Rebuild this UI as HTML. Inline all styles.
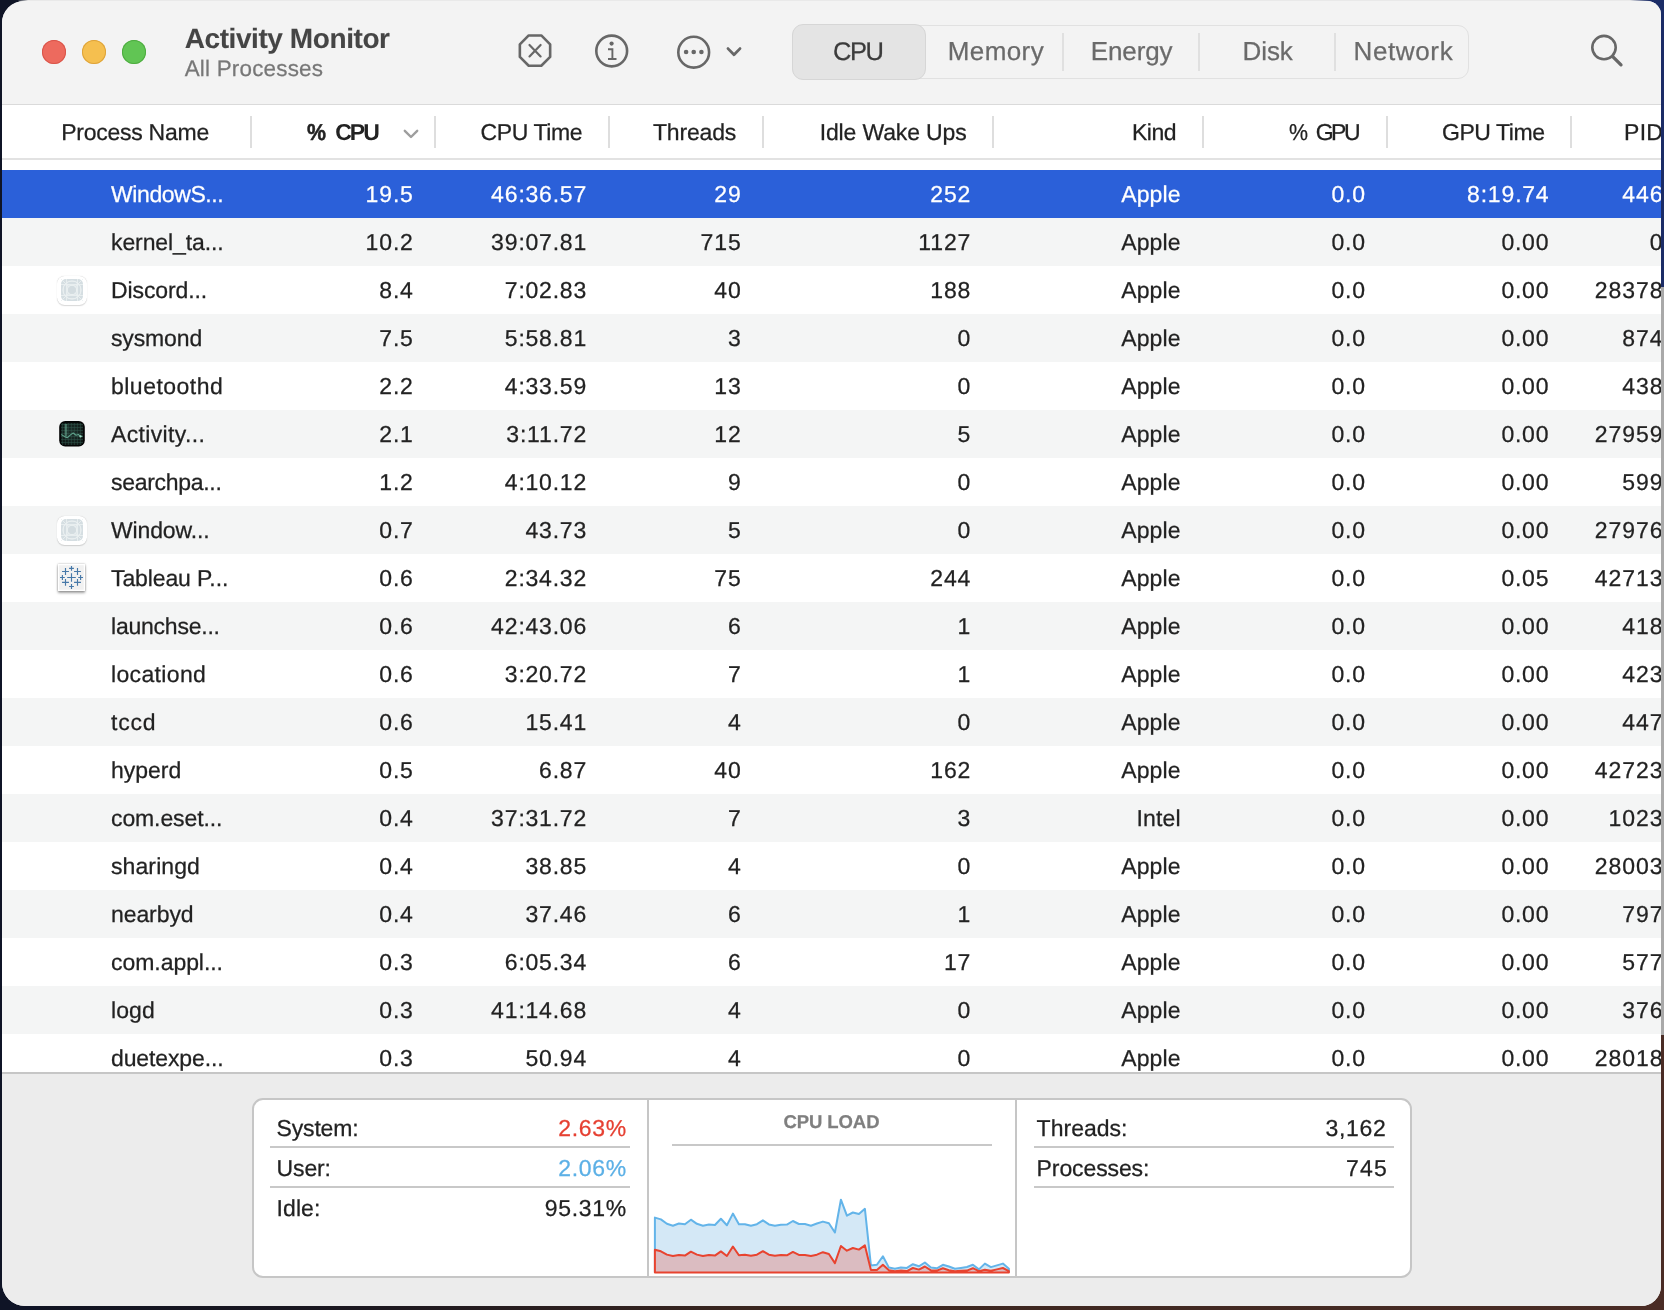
<!DOCTYPE html>
<html><head><meta charset="utf-8"><title>Activity Monitor</title>
<style>
html,body{margin:0;padding:0;}
body{width:1664px;height:1310px;position:relative;overflow:hidden;
background:linear-gradient(90deg,#0f1322 0%,#1c1820 22%,#3a261f 45%,#4a2c25 100%);font-family:"Liberation Sans", sans-serif;text-rendering:geometricPrecision;}
.t{position:absolute;white-space:nowrap;line-height:1;-webkit-text-stroke:0.25px currentColor;}
#win{position:absolute;left:2px;top:1px;width:1659.3px;height:1304.6px;border-radius:22px 14px 20px 23px;overflow:hidden;background:#f3f3f3;}
#in{position:absolute;left:-2px;top:-1px;width:1664px;height:1310px;will-change:transform;}
</style></head><body>
<div style="position:absolute;left:0;top:0;width:40px;height:1310px;background:#0f1426"></div>
<div style="position:absolute;right:0;top:0;width:40px;height:287px;background:#1b2c66"></div>
<div style="position:absolute;right:0;top:287px;width:3px;height:748px;background:#a9a9a9"></div>
<div style="position:absolute;right:0;top:1035px;width:40px;height:275px;background:#4a2c25"></div>
<div style="position:absolute;left:18px;top:0;width:1632px;height:1.5px;background:linear-gradient(90deg,#1a2030 0,#e9e9e9 10px,#e9e9e9 1612px,#1b2c66 1632px)"></div>
<div id="win"><div id="in">
<div style="position:absolute;left:0;top:0;width:1664px;height:104px;background:#f3f3f3"></div>
<div style="position:absolute;left:0;top:103.5px;width:1664px;height:1.5px;background:#dadada"></div>
<div style="position:absolute;left:42px;top:40px;width:24px;height:24px;border-radius:50%;background:#ed6a5e;box-shadow:inset 0 0 0 1px #d9554a"></div>
<div style="position:absolute;left:82px;top:40px;width:24px;height:24px;border-radius:50%;background:#f5bf4f;box-shadow:inset 0 0 0 1px #dea33a"></div>
<div style="position:absolute;left:122px;top:40px;width:24px;height:24px;border-radius:50%;background:#61c554;box-shadow:inset 0 0 0 1px #4eac40"></div>
<div class="t" style="left:184.70px;top:25.00px;font-size:28px;color:#454545;font-weight:700;-webkit-text-stroke:0.1px currentColor;letter-spacing:-0.418px;">Activity Monitor</div>
<div class="t" style="left:184.70px;top:58.00px;font-size:22.4px;color:#777777;font-weight:400;letter-spacing:0.217px;">All Processes</div>
<svg style="position:absolute;left:0;top:0" width="1664" height="104" viewBox="0 0 1664 104"><polygon points="550.15,56.88 541.28,65.75 528.72,65.75 519.85,56.88 519.85,44.32 528.72,35.45 541.28,35.45 550.15,44.32" fill="none" stroke="#676767" stroke-width="2.6" stroke-linejoin="round"/><path d="M529.5 45 L540.6 56.4 M540.6 45 L529.5 56.4" stroke="#676767" stroke-width="2.2" stroke-linecap="round"/><circle cx="611.7" cy="51" r="15.4" fill="none" stroke="#676767" stroke-width="2.6"/><circle cx="611.6" cy="43.6" r="2.1" fill="#676767"/><path d="M608 49.3 L612.4 49.3 L612.4 59 M608 59 L616.5 59" fill="none" stroke="#676767" stroke-width="1.9"/><circle cx="693.7" cy="52.2" r="15.4" fill="none" stroke="#676767" stroke-width="2.6"/><circle cx="686.1" cy="52" r="2.3" fill="#676767"/><circle cx="693.7" cy="52" r="2.3" fill="#676767"/><circle cx="701.4" cy="52" r="2.3" fill="#676767"/><path d="M728 48.6 L734 54.8 L740 48.6" fill="none" stroke="#676767" stroke-width="2.8" stroke-linecap="round" stroke-linejoin="round"/><circle cx="1604" cy="47.6" r="11.7" fill="none" stroke="#676767" stroke-width="2.6"/><path d="M1612.5 56.3 L1621 64.8" stroke="#676767" stroke-width="3.3" stroke-linecap="round"/></svg>
<div style="position:absolute;left:792px;top:24.5px;width:677px;height:54.5px;box-sizing:border-box;border:1.2px solid #e1e1e1;border-radius:11px"></div>
<div style="position:absolute;left:792px;top:24px;width:134px;height:55.5px;box-sizing:border-box;border:1.2px solid #d6d6d6;border-radius:11px;background:#e4e4e4"></div>
<div style="position:absolute;left:1062.25px;top:32.5px;width:1.5px;height:38px;background:#e0e0e0"></div>
<div style="position:absolute;left:1198.25px;top:32.5px;width:1.5px;height:38px;background:#e0e0e0"></div>
<div style="position:absolute;left:1334.25px;top:32.5px;width:1.5px;height:38px;background:#e0e0e0"></div>
<div class="t" style="left:833.00px;top:40.00px;font-size:25.5px;color:#3c3c3c;font-weight:400;letter-spacing:-1.415px;">CPU</div>
<div class="t" style="left:947.70px;top:38.00px;font-size:26px;color:#6a6a6a;font-weight:400;letter-spacing:0.423px;">Memory</div>
<div class="t" style="left:1090.70px;top:38.00px;font-size:26px;color:#6a6a6a;font-weight:400;letter-spacing:-0.094px;">Energy</div>
<div class="t" style="left:1242.40px;top:38.00px;font-size:26px;color:#6a6a6a;font-weight:400;letter-spacing:-0.032px;">Disk</div>
<div class="t" style="left:1353.50px;top:38.00px;font-size:26px;color:#6a6a6a;font-weight:400;letter-spacing:0.630px;">Network</div>
<div style="position:absolute;left:0;top:105px;width:1664px;height:968px;background:#ffffff"></div>
<div style="position:absolute;left:0;top:158px;width:1664px;height:1.5px;background:#e2e2e2"></div>
<div style="position:absolute;left:250.25px;top:116px;width:1.5px;height:32px;background:#dedede"></div>
<div style="position:absolute;left:434.25px;top:116px;width:1.5px;height:32px;background:#dedede"></div>
<div style="position:absolute;left:608.25px;top:116px;width:1.5px;height:32px;background:#dedede"></div>
<div style="position:absolute;left:762.25px;top:116px;width:1.5px;height:32px;background:#dedede"></div>
<div style="position:absolute;left:992.25px;top:116px;width:1.5px;height:32px;background:#dedede"></div>
<div style="position:absolute;left:1202.25px;top:116px;width:1.5px;height:32px;background:#dedede"></div>
<div style="position:absolute;left:1386.25px;top:116px;width:1.5px;height:32px;background:#dedede"></div>
<div style="position:absolute;left:1570.25px;top:116px;width:1.5px;height:32px;background:#dedede"></div>
<div class="t" style="left:61.20px;top:121.00px;font-size:23px;color:#222222;font-weight:400;letter-spacing:-0.258px;">Process Name</div>
<div class="t" style="left:307.00px;top:121.00px;font-size:23px;color:#222222;font-weight:700;-webkit-text-stroke:0.5px currentColor;transform:scaleX(0.93);transform-origin:0 0;">%</div>
<div class="t" style="left:335.20px;top:121.00px;font-size:23px;color:#222222;font-weight:700;-webkit-text-stroke:0;letter-spacing:-1.976px;">CPU</div>
<svg style="position:absolute;left:400px;top:126px" width="24" height="16" viewBox="0 0 24 16"><path d="M4.8 4.8 L11 11 L17.2 4.8" fill="none" stroke="#9e9e9e" stroke-width="2.4" stroke-linecap="round" stroke-linejoin="round"/></svg>
<div class="t" style="left:480.50px;top:121.00px;font-size:23px;color:#222222;font-weight:400;letter-spacing:-0.384px;">CPU Time</div>
<div class="t" style="left:653.00px;top:121.00px;font-size:23px;color:#222222;font-weight:400;letter-spacing:-0.177px;">Threads</div>
<div class="t" style="left:819.70px;top:121.00px;font-size:23px;color:#222222;font-weight:400;letter-spacing:-0.141px;">Idle Wake Ups</div>
<div class="t" style="left:1132.00px;top:121.00px;font-size:23px;color:#222222;font-weight:400;letter-spacing:-0.474px;">Kind</div>
<div class="t" style="left:1289.20px;top:121.00px;font-size:23px;color:#222222;font-weight:400;transform:scaleX(0.93);transform-origin:0 0;">%</div>
<div class="t" style="left:1315.70px;top:121.00px;font-size:23px;color:#222222;font-weight:400;letter-spacing:-2.471px;">GPU</div>
<div class="t" style="left:1442.00px;top:121.00px;font-size:23px;color:#222222;font-weight:400;letter-spacing:-0.439px;">GPU Time</div>
<div class="t" style="left:1624.00px;top:121.00px;font-size:23px;color:#222222;font-weight:400;letter-spacing:0.300px;">PID</div>
<div style="position:absolute;left:0;top:170px;width:1664px;height:48px;background:#2b60d9"></div>
<div class="t" style="left:111.00px;top:183.00px;font-size:23px;color:#ffffff;font-weight:400;letter-spacing:-0.401px;">WindowS...</div>
<div class="t" style="left:365.59px;top:183.00px;font-size:23px;color:#ffffff;font-weight:400;letter-spacing:0.920px;">19<span style="letter-spacing:0.61px">.</span>5</div>
<div class="t" style="left:490.94px;top:183.00px;font-size:23px;color:#ffffff;font-weight:400;letter-spacing:0.920px;">46<span style="letter-spacing:0.61px">:</span>36<span style="letter-spacing:0.61px">.</span>57</div>
<div class="t" style="left:714.30px;top:183.00px;font-size:23px;color:#ffffff;font-weight:400;letter-spacing:0.920px;">29</div>
<div class="t" style="left:930.20px;top:183.00px;font-size:23px;color:#ffffff;font-weight:400;letter-spacing:0.920px;">252</div>
<div class="t" style="left:1121.13px;top:183.00px;font-size:23px;color:#ffffff;font-weight:400;letter-spacing:0.160px;">Apple</div>
<div class="t" style="left:1331.40px;top:183.00px;font-size:23px;color:#ffffff;font-weight:400;letter-spacing:0.920px;">0<span style="letter-spacing:0.61px">.</span>0</div>
<div class="t" style="left:1466.97px;top:183.00px;font-size:23px;color:#ffffff;font-weight:400;letter-spacing:0.920px;">8<span style="letter-spacing:0.61px">:</span>19<span style="letter-spacing:0.61px">.</span>74</div>
<div class="t" style="left:1622.30px;top:183.00px;font-size:23px;color:#ffffff;font-weight:400;letter-spacing:0.920px;">446</div>
<div style="position:absolute;left:0;top:218px;width:1664px;height:48px;background:#f4f5f5"></div>
<div class="t" style="left:111.00px;top:231.00px;font-size:23px;color:#222222;font-weight:400;letter-spacing:-0.098px;">kernel_ta...</div>
<div class="t" style="left:365.59px;top:231.00px;font-size:23px;color:#222222;font-weight:400;letter-spacing:0.920px;">10<span style="letter-spacing:0.61px">.</span>2</div>
<div class="t" style="left:490.94px;top:231.00px;font-size:23px;color:#222222;font-weight:400;letter-spacing:0.920px;">39<span style="letter-spacing:0.61px">:</span>07<span style="letter-spacing:0.61px">.</span>81</div>
<div class="t" style="left:700.60px;top:231.00px;font-size:23px;color:#222222;font-weight:400;letter-spacing:0.920px;">715</div>
<div class="t" style="left:918.19px;top:231.00px;font-size:23px;color:#222222;font-weight:400;letter-spacing:0.920px;">1127</div>
<div class="t" style="left:1121.13px;top:231.00px;font-size:23px;color:#222222;font-weight:400;letter-spacing:0.160px;">Apple</div>
<div class="t" style="left:1331.40px;top:231.00px;font-size:23px;color:#222222;font-weight:400;letter-spacing:0.920px;">0<span style="letter-spacing:0.61px">.</span>0</div>
<div class="t" style="left:1501.39px;top:231.00px;font-size:23px;color:#222222;font-weight:400;letter-spacing:0.920px;">0<span style="letter-spacing:0.61px">.</span>00</div>
<div class="t" style="left:1649.71px;top:231.00px;font-size:23px;color:#222222;font-weight:400;letter-spacing:0.920px;">0</div>
<div class="t" style="left:111.00px;top:279.00px;font-size:23px;color:#222222;font-weight:400;letter-spacing:-0.103px;">Discord...</div>
<div class="t" style="left:379.30px;top:279.00px;font-size:23px;color:#222222;font-weight:400;letter-spacing:0.920px;">8<span style="letter-spacing:0.61px">.</span>4</div>
<div class="t" style="left:504.67px;top:279.00px;font-size:23px;color:#222222;font-weight:400;letter-spacing:0.920px;">7<span style="letter-spacing:0.61px">:</span>02<span style="letter-spacing:0.61px">.</span>83</div>
<div class="t" style="left:714.30px;top:279.00px;font-size:23px;color:#222222;font-weight:400;letter-spacing:0.920px;">40</div>
<div class="t" style="left:930.20px;top:279.00px;font-size:23px;color:#222222;font-weight:400;letter-spacing:0.920px;">188</div>
<div class="t" style="left:1121.13px;top:279.00px;font-size:23px;color:#222222;font-weight:400;letter-spacing:0.160px;">Apple</div>
<div class="t" style="left:1331.40px;top:279.00px;font-size:23px;color:#222222;font-weight:400;letter-spacing:0.920px;">0<span style="letter-spacing:0.61px">.</span>0</div>
<div class="t" style="left:1501.39px;top:279.00px;font-size:23px;color:#222222;font-weight:400;letter-spacing:0.920px;">0<span style="letter-spacing:0.61px">.</span>00</div>
<div class="t" style="left:1594.86px;top:279.00px;font-size:23px;color:#222222;font-weight:400;letter-spacing:0.920px;">28378</div>
<div style="position:absolute;left:57.3px;top:275.5px;width:29.6px;height:29px;border-radius:7.5px;background:#ffffff;box-shadow:0 0.6px 1.2px rgba(0,0,0,0.16), 0 0 0.5px rgba(0,0,0,0.12)"></div>
<svg style="position:absolute;left:61px;top:278.9px" width="22" height="22" viewBox="0 0 22 22"><rect x="0" y="0" width="22" height="22" rx="5" fill="#d5dee2"/><g fill="none" stroke="#eaeff1" stroke-width="0.9"><path d="M5.5 0 V22 M16.5 0 V22 M0 5.5 H22 M0 16.5 H22 M0 0 L22 22 M22 0 L0 22"/><circle cx="11" cy="11" r="4.6"/><ellipse cx="11" cy="4.4" rx="5.2" ry="2.2"/><ellipse cx="11" cy="17.6" rx="5.2" ry="2.2"/><ellipse cx="4.4" cy="11" rx="2.2" ry="5.2"/><ellipse cx="17.6" cy="11" rx="2.2" ry="5.2"/><circle cx="11" cy="11" r="9"/></g><circle cx="11" cy="11" r="3.8" fill="#d3dce0"/></svg>
<div style="position:absolute;left:0;top:314px;width:1664px;height:48px;background:#f4f5f5"></div>
<div class="t" style="left:111.00px;top:327.00px;font-size:23px;color:#222222;font-weight:400;letter-spacing:-0.137px;">sysmond</div>
<div class="t" style="left:379.30px;top:327.00px;font-size:23px;color:#222222;font-weight:400;letter-spacing:0.920px;">7<span style="letter-spacing:0.61px">.</span>5</div>
<div class="t" style="left:504.67px;top:327.00px;font-size:23px;color:#222222;font-weight:400;letter-spacing:0.920px;">5<span style="letter-spacing:0.61px">:</span>58<span style="letter-spacing:0.61px">.</span>81</div>
<div class="t" style="left:728.01px;top:327.00px;font-size:23px;color:#222222;font-weight:400;letter-spacing:0.920px;">3</div>
<div class="t" style="left:957.61px;top:327.00px;font-size:23px;color:#222222;font-weight:400;letter-spacing:0.920px;">0</div>
<div class="t" style="left:1121.13px;top:327.00px;font-size:23px;color:#222222;font-weight:400;letter-spacing:0.160px;">Apple</div>
<div class="t" style="left:1331.40px;top:327.00px;font-size:23px;color:#222222;font-weight:400;letter-spacing:0.920px;">0<span style="letter-spacing:0.61px">.</span>0</div>
<div class="t" style="left:1501.39px;top:327.00px;font-size:23px;color:#222222;font-weight:400;letter-spacing:0.920px;">0<span style="letter-spacing:0.61px">.</span>00</div>
<div class="t" style="left:1622.30px;top:327.00px;font-size:23px;color:#222222;font-weight:400;letter-spacing:0.920px;">874</div>
<div class="t" style="left:111.00px;top:375.00px;font-size:23px;color:#222222;font-weight:400;letter-spacing:0.485px;">bluetoothd</div>
<div class="t" style="left:379.30px;top:375.00px;font-size:23px;color:#222222;font-weight:400;letter-spacing:0.920px;">2<span style="letter-spacing:0.61px">.</span>2</div>
<div class="t" style="left:504.67px;top:375.00px;font-size:23px;color:#222222;font-weight:400;letter-spacing:0.920px;">4<span style="letter-spacing:0.61px">:</span>33<span style="letter-spacing:0.61px">.</span>59</div>
<div class="t" style="left:714.30px;top:375.00px;font-size:23px;color:#222222;font-weight:400;letter-spacing:0.920px;">13</div>
<div class="t" style="left:957.61px;top:375.00px;font-size:23px;color:#222222;font-weight:400;letter-spacing:0.920px;">0</div>
<div class="t" style="left:1121.13px;top:375.00px;font-size:23px;color:#222222;font-weight:400;letter-spacing:0.160px;">Apple</div>
<div class="t" style="left:1331.40px;top:375.00px;font-size:23px;color:#222222;font-weight:400;letter-spacing:0.920px;">0<span style="letter-spacing:0.61px">.</span>0</div>
<div class="t" style="left:1501.39px;top:375.00px;font-size:23px;color:#222222;font-weight:400;letter-spacing:0.920px;">0<span style="letter-spacing:0.61px">.</span>00</div>
<div class="t" style="left:1622.30px;top:375.00px;font-size:23px;color:#222222;font-weight:400;letter-spacing:0.920px;">438</div>
<div style="position:absolute;left:0;top:410px;width:1664px;height:48px;background:#f4f5f5"></div>
<div class="t" style="left:111.00px;top:423.00px;font-size:23px;color:#222222;font-weight:400;letter-spacing:0.350px;">Activity...</div>
<div class="t" style="left:379.30px;top:423.00px;font-size:23px;color:#222222;font-weight:400;letter-spacing:0.920px;">2<span style="letter-spacing:0.61px">.</span>1</div>
<div class="t" style="left:506.37px;top:423.00px;font-size:23px;color:#222222;font-weight:400;letter-spacing:0.920px;">3<span style="letter-spacing:0.61px">:</span>11<span style="letter-spacing:0.61px">.</span>72</div>
<div class="t" style="left:714.30px;top:423.00px;font-size:23px;color:#222222;font-weight:400;letter-spacing:0.920px;">12</div>
<div class="t" style="left:957.61px;top:423.00px;font-size:23px;color:#222222;font-weight:400;letter-spacing:0.920px;">5</div>
<div class="t" style="left:1121.13px;top:423.00px;font-size:23px;color:#222222;font-weight:400;letter-spacing:0.160px;">Apple</div>
<div class="t" style="left:1331.40px;top:423.00px;font-size:23px;color:#222222;font-weight:400;letter-spacing:0.920px;">0<span style="letter-spacing:0.61px">.</span>0</div>
<div class="t" style="left:1501.39px;top:423.00px;font-size:23px;color:#222222;font-weight:400;letter-spacing:0.920px;">0<span style="letter-spacing:0.61px">.</span>00</div>
<div class="t" style="left:1594.86px;top:423.00px;font-size:23px;color:#222222;font-weight:400;letter-spacing:0.920px;">27959</div>
<svg style="position:absolute;left:0;top:410px" width="100" height="48" viewBox="0 410 100 48"><defs><radialGradient id="amg" cx="0.5" cy="0.45" r="0.7"><stop offset="0" stop-color="#1d302b"/><stop offset="1" stop-color="#0c1412"/></radialGradient></defs><rect x="59.2" y="421.1" width="25.6" height="25.5" rx="6" fill="#020303"/><rect x="60.9" y="422.8" width="22.2" height="22.1" rx="4" fill="url(#amg)"/><path d="M62.4 423 V445 M65.4 423 V445 M68.4 423 V445 M71.4 423 V445 M74.4 423 V445 M77.4 423 V445 M80.4 423 V445 M61 424.5 H83 M61 427.5 H83 M61 430.5 H83 M61 433.5 H83 M61 436.5 H83 M61 439.5 H83 M61 442.5 H83 " stroke="#31574c" stroke-width="0.5" fill="none"/><rect x="64.6" y="424" width="2.6" height="12.5" fill="#6fb59c" opacity="0.5"/><path d="M61.3 434.5 L64.3 436.4 L67.1 437.8 L70.8 434.6 L73.2 433 L76 435.2 L78.4 434.5 L80.5 436.4 L82.5 436.2" fill="none" stroke="#5fa38c" stroke-width="1.1" stroke-linejoin="round"/><circle cx="80.5" cy="436.4" r="1.1" fill="#9fdcc6"/></svg>
<div class="t" style="left:111.00px;top:471.00px;font-size:23px;color:#222222;font-weight:400;letter-spacing:-0.298px;">searchpa...</div>
<div class="t" style="left:379.30px;top:471.00px;font-size:23px;color:#222222;font-weight:400;letter-spacing:0.920px;">1<span style="letter-spacing:0.61px">.</span>2</div>
<div class="t" style="left:504.67px;top:471.00px;font-size:23px;color:#222222;font-weight:400;letter-spacing:0.920px;">4<span style="letter-spacing:0.61px">:</span>10<span style="letter-spacing:0.61px">.</span>12</div>
<div class="t" style="left:728.01px;top:471.00px;font-size:23px;color:#222222;font-weight:400;letter-spacing:0.920px;">9</div>
<div class="t" style="left:957.61px;top:471.00px;font-size:23px;color:#222222;font-weight:400;letter-spacing:0.920px;">0</div>
<div class="t" style="left:1121.13px;top:471.00px;font-size:23px;color:#222222;font-weight:400;letter-spacing:0.160px;">Apple</div>
<div class="t" style="left:1331.40px;top:471.00px;font-size:23px;color:#222222;font-weight:400;letter-spacing:0.920px;">0<span style="letter-spacing:0.61px">.</span>0</div>
<div class="t" style="left:1501.39px;top:471.00px;font-size:23px;color:#222222;font-weight:400;letter-spacing:0.920px;">0<span style="letter-spacing:0.61px">.</span>00</div>
<div class="t" style="left:1622.30px;top:471.00px;font-size:23px;color:#222222;font-weight:400;letter-spacing:0.920px;">599</div>
<div style="position:absolute;left:0;top:506px;width:1664px;height:48px;background:#f4f5f5"></div>
<div class="t" style="left:111.00px;top:519.00px;font-size:23px;color:#222222;font-weight:400;letter-spacing:-0.138px;">Window...</div>
<div class="t" style="left:379.30px;top:519.00px;font-size:23px;color:#222222;font-weight:400;letter-spacing:0.920px;">0<span style="letter-spacing:0.61px">.</span>7</div>
<div class="t" style="left:525.38px;top:519.00px;font-size:23px;color:#222222;font-weight:400;letter-spacing:0.920px;">43<span style="letter-spacing:0.61px">.</span>73</div>
<div class="t" style="left:728.01px;top:519.00px;font-size:23px;color:#222222;font-weight:400;letter-spacing:0.920px;">5</div>
<div class="t" style="left:957.61px;top:519.00px;font-size:23px;color:#222222;font-weight:400;letter-spacing:0.920px;">0</div>
<div class="t" style="left:1121.13px;top:519.00px;font-size:23px;color:#222222;font-weight:400;letter-spacing:0.160px;">Apple</div>
<div class="t" style="left:1331.40px;top:519.00px;font-size:23px;color:#222222;font-weight:400;letter-spacing:0.920px;">0<span style="letter-spacing:0.61px">.</span>0</div>
<div class="t" style="left:1501.39px;top:519.00px;font-size:23px;color:#222222;font-weight:400;letter-spacing:0.920px;">0<span style="letter-spacing:0.61px">.</span>00</div>
<div class="t" style="left:1594.86px;top:519.00px;font-size:23px;color:#222222;font-weight:400;letter-spacing:0.920px;">27976</div>
<div style="position:absolute;left:57.3px;top:515.5px;width:29.6px;height:29px;border-radius:7.5px;background:#ffffff;box-shadow:0 0.6px 1.2px rgba(0,0,0,0.16), 0 0 0.5px rgba(0,0,0,0.12)"></div>
<svg style="position:absolute;left:61px;top:518.9px" width="22" height="22" viewBox="0 0 22 22"><rect x="0" y="0" width="22" height="22" rx="5" fill="#d5dee2"/><g fill="none" stroke="#eaeff1" stroke-width="0.9"><path d="M5.5 0 V22 M16.5 0 V22 M0 5.5 H22 M0 16.5 H22 M0 0 L22 22 M22 0 L0 22"/><circle cx="11" cy="11" r="4.6"/><ellipse cx="11" cy="4.4" rx="5.2" ry="2.2"/><ellipse cx="11" cy="17.6" rx="5.2" ry="2.2"/><ellipse cx="4.4" cy="11" rx="2.2" ry="5.2"/><ellipse cx="17.6" cy="11" rx="2.2" ry="5.2"/><circle cx="11" cy="11" r="9"/></g><circle cx="11" cy="11" r="3.8" fill="#d3dce0"/></svg>
<div class="t" style="left:111.00px;top:567.00px;font-size:23px;color:#222222;font-weight:400;letter-spacing:-0.109px;">Tableau P...</div>
<div class="t" style="left:379.30px;top:567.00px;font-size:23px;color:#222222;font-weight:400;letter-spacing:0.920px;">0<span style="letter-spacing:0.61px">.</span>6</div>
<div class="t" style="left:504.67px;top:567.00px;font-size:23px;color:#222222;font-weight:400;letter-spacing:0.920px;">2<span style="letter-spacing:0.61px">:</span>34<span style="letter-spacing:0.61px">.</span>32</div>
<div class="t" style="left:714.30px;top:567.00px;font-size:23px;color:#222222;font-weight:400;letter-spacing:0.920px;">75</div>
<div class="t" style="left:930.20px;top:567.00px;font-size:23px;color:#222222;font-weight:400;letter-spacing:0.920px;">244</div>
<div class="t" style="left:1121.13px;top:567.00px;font-size:23px;color:#222222;font-weight:400;letter-spacing:0.160px;">Apple</div>
<div class="t" style="left:1331.40px;top:567.00px;font-size:23px;color:#222222;font-weight:400;letter-spacing:0.920px;">0<span style="letter-spacing:0.61px">.</span>0</div>
<div class="t" style="left:1501.39px;top:567.00px;font-size:23px;color:#222222;font-weight:400;letter-spacing:0.920px;">0<span style="letter-spacing:0.61px">.</span>05</div>
<div class="t" style="left:1594.86px;top:567.00px;font-size:23px;color:#222222;font-weight:400;letter-spacing:0.920px;">42713</div>
<div style="position:absolute;left:57.9px;top:564.3px;width:27.1px;height:26.4px;background:#f1f1f1;box-shadow:inset 0 0 0 1.2px #ffffff, 0 1.5px 2.5px rgba(0,0,0,0.35), 0 0 2px rgba(0,0,0,0.3)"></div>
<svg style="position:absolute;left:0;top:554px" width="100" height="48" viewBox="0 554 100 48"><path d="M67.20 577.50 H75.80 M71.50 573.20 V581.80 M69.10 568.40 H73.90 M71.50 566.00 V570.80 M69.10 586.50 H73.90 M71.50 584.10 V588.90 M60.00 577.50 H64.80 M62.40 575.10 V579.90 M78.20 577.50 H83.00 M80.60 575.10 V579.90 M62.05 571.50 H68.95 M65.50 568.05 V574.95 M74.05 571.50 H80.95 M77.50 568.05 V574.95 M62.05 582.40 H68.95 M65.50 578.95 V585.85 M74.05 582.40 H80.95 M77.50 578.95 V585.85 " stroke="#4678a8" stroke-width="1.15" fill="none"/></svg>
<div style="position:absolute;left:0;top:602px;width:1664px;height:48px;background:#f4f5f5"></div>
<div class="t" style="left:111.00px;top:615.00px;font-size:23px;color:#222222;font-weight:400;letter-spacing:-0.223px;">launchse...</div>
<div class="t" style="left:379.30px;top:615.00px;font-size:23px;color:#222222;font-weight:400;letter-spacing:0.920px;">0<span style="letter-spacing:0.61px">.</span>6</div>
<div class="t" style="left:490.94px;top:615.00px;font-size:23px;color:#222222;font-weight:400;letter-spacing:0.920px;">42<span style="letter-spacing:0.61px">:</span>43<span style="letter-spacing:0.61px">.</span>06</div>
<div class="t" style="left:728.01px;top:615.00px;font-size:23px;color:#222222;font-weight:400;letter-spacing:0.920px;">6</div>
<div class="t" style="left:957.61px;top:615.00px;font-size:23px;color:#222222;font-weight:400;letter-spacing:0.920px;">1</div>
<div class="t" style="left:1121.13px;top:615.00px;font-size:23px;color:#222222;font-weight:400;letter-spacing:0.160px;">Apple</div>
<div class="t" style="left:1331.40px;top:615.00px;font-size:23px;color:#222222;font-weight:400;letter-spacing:0.920px;">0<span style="letter-spacing:0.61px">.</span>0</div>
<div class="t" style="left:1501.39px;top:615.00px;font-size:23px;color:#222222;font-weight:400;letter-spacing:0.920px;">0<span style="letter-spacing:0.61px">.</span>00</div>
<div class="t" style="left:1622.30px;top:615.00px;font-size:23px;color:#222222;font-weight:400;letter-spacing:0.920px;">418</div>
<div class="t" style="left:111.00px;top:663.00px;font-size:23px;color:#222222;font-weight:400;letter-spacing:0.354px;">locationd</div>
<div class="t" style="left:379.30px;top:663.00px;font-size:23px;color:#222222;font-weight:400;letter-spacing:0.920px;">0<span style="letter-spacing:0.61px">.</span>6</div>
<div class="t" style="left:504.67px;top:663.00px;font-size:23px;color:#222222;font-weight:400;letter-spacing:0.920px;">3<span style="letter-spacing:0.61px">:</span>20<span style="letter-spacing:0.61px">.</span>72</div>
<div class="t" style="left:728.01px;top:663.00px;font-size:23px;color:#222222;font-weight:400;letter-spacing:0.920px;">7</div>
<div class="t" style="left:957.61px;top:663.00px;font-size:23px;color:#222222;font-weight:400;letter-spacing:0.920px;">1</div>
<div class="t" style="left:1121.13px;top:663.00px;font-size:23px;color:#222222;font-weight:400;letter-spacing:0.160px;">Apple</div>
<div class="t" style="left:1331.40px;top:663.00px;font-size:23px;color:#222222;font-weight:400;letter-spacing:0.920px;">0<span style="letter-spacing:0.61px">.</span>0</div>
<div class="t" style="left:1501.39px;top:663.00px;font-size:23px;color:#222222;font-weight:400;letter-spacing:0.920px;">0<span style="letter-spacing:0.61px">.</span>00</div>
<div class="t" style="left:1622.30px;top:663.00px;font-size:23px;color:#222222;font-weight:400;letter-spacing:0.920px;">423</div>
<div style="position:absolute;left:0;top:698px;width:1664px;height:48px;background:#f4f5f5"></div>
<div class="t" style="left:111.00px;top:711.00px;font-size:23px;color:#222222;font-weight:400;letter-spacing:0.773px;">tccd</div>
<div class="t" style="left:379.30px;top:711.00px;font-size:23px;color:#222222;font-weight:400;letter-spacing:0.920px;">0<span style="letter-spacing:0.61px">.</span>6</div>
<div class="t" style="left:525.38px;top:711.00px;font-size:23px;color:#222222;font-weight:400;letter-spacing:0.920px;">15<span style="letter-spacing:0.61px">.</span>41</div>
<div class="t" style="left:728.01px;top:711.00px;font-size:23px;color:#222222;font-weight:400;letter-spacing:0.920px;">4</div>
<div class="t" style="left:957.61px;top:711.00px;font-size:23px;color:#222222;font-weight:400;letter-spacing:0.920px;">0</div>
<div class="t" style="left:1121.13px;top:711.00px;font-size:23px;color:#222222;font-weight:400;letter-spacing:0.160px;">Apple</div>
<div class="t" style="left:1331.40px;top:711.00px;font-size:23px;color:#222222;font-weight:400;letter-spacing:0.920px;">0<span style="letter-spacing:0.61px">.</span>0</div>
<div class="t" style="left:1501.39px;top:711.00px;font-size:23px;color:#222222;font-weight:400;letter-spacing:0.920px;">0<span style="letter-spacing:0.61px">.</span>00</div>
<div class="t" style="left:1622.30px;top:711.00px;font-size:23px;color:#222222;font-weight:400;letter-spacing:0.920px;">447</div>
<div class="t" style="left:111.00px;top:759.00px;font-size:23px;color:#222222;font-weight:400;letter-spacing:-0.027px;">hyperd</div>
<div class="t" style="left:379.30px;top:759.00px;font-size:23px;color:#222222;font-weight:400;letter-spacing:0.920px;">0<span style="letter-spacing:0.61px">.</span>5</div>
<div class="t" style="left:539.09px;top:759.00px;font-size:23px;color:#222222;font-weight:400;letter-spacing:0.920px;">6<span style="letter-spacing:0.61px">.</span>87</div>
<div class="t" style="left:714.30px;top:759.00px;font-size:23px;color:#222222;font-weight:400;letter-spacing:0.920px;">40</div>
<div class="t" style="left:930.20px;top:759.00px;font-size:23px;color:#222222;font-weight:400;letter-spacing:0.920px;">162</div>
<div class="t" style="left:1121.13px;top:759.00px;font-size:23px;color:#222222;font-weight:400;letter-spacing:0.160px;">Apple</div>
<div class="t" style="left:1331.40px;top:759.00px;font-size:23px;color:#222222;font-weight:400;letter-spacing:0.920px;">0<span style="letter-spacing:0.61px">.</span>0</div>
<div class="t" style="left:1501.39px;top:759.00px;font-size:23px;color:#222222;font-weight:400;letter-spacing:0.920px;">0<span style="letter-spacing:0.61px">.</span>00</div>
<div class="t" style="left:1594.86px;top:759.00px;font-size:23px;color:#222222;font-weight:400;letter-spacing:0.920px;">42723</div>
<div style="position:absolute;left:0;top:794px;width:1664px;height:48px;background:#f4f5f5"></div>
<div class="t" style="left:111.00px;top:807.00px;font-size:23px;color:#222222;font-weight:400;letter-spacing:-0.109px;">com.eset...</div>
<div class="t" style="left:379.30px;top:807.00px;font-size:23px;color:#222222;font-weight:400;letter-spacing:0.920px;">0<span style="letter-spacing:0.61px">.</span>4</div>
<div class="t" style="left:490.94px;top:807.00px;font-size:23px;color:#222222;font-weight:400;letter-spacing:0.920px;">37<span style="letter-spacing:0.61px">:</span>31<span style="letter-spacing:0.61px">.</span>72</div>
<div class="t" style="left:728.01px;top:807.00px;font-size:23px;color:#222222;font-weight:400;letter-spacing:0.920px;">7</div>
<div class="t" style="left:957.61px;top:807.00px;font-size:23px;color:#222222;font-weight:400;letter-spacing:0.920px;">3</div>
<div class="t" style="left:1136.49px;top:807.00px;font-size:23px;color:#222222;font-weight:400;letter-spacing:0.160px;">Intel</div>
<div class="t" style="left:1331.40px;top:807.00px;font-size:23px;color:#222222;font-weight:400;letter-spacing:0.920px;">0<span style="letter-spacing:0.61px">.</span>0</div>
<div class="t" style="left:1501.39px;top:807.00px;font-size:23px;color:#222222;font-weight:400;letter-spacing:0.920px;">0<span style="letter-spacing:0.61px">.</span>00</div>
<div class="t" style="left:1608.57px;top:807.00px;font-size:23px;color:#222222;font-weight:400;letter-spacing:0.920px;">1023</div>
<div class="t" style="left:111.00px;top:855.00px;font-size:23px;color:#222222;font-weight:400;letter-spacing:0.096px;">sharingd</div>
<div class="t" style="left:379.30px;top:855.00px;font-size:23px;color:#222222;font-weight:400;letter-spacing:0.920px;">0<span style="letter-spacing:0.61px">.</span>4</div>
<div class="t" style="left:525.38px;top:855.00px;font-size:23px;color:#222222;font-weight:400;letter-spacing:0.920px;">38<span style="letter-spacing:0.61px">.</span>85</div>
<div class="t" style="left:728.01px;top:855.00px;font-size:23px;color:#222222;font-weight:400;letter-spacing:0.920px;">4</div>
<div class="t" style="left:957.61px;top:855.00px;font-size:23px;color:#222222;font-weight:400;letter-spacing:0.920px;">0</div>
<div class="t" style="left:1121.13px;top:855.00px;font-size:23px;color:#222222;font-weight:400;letter-spacing:0.160px;">Apple</div>
<div class="t" style="left:1331.40px;top:855.00px;font-size:23px;color:#222222;font-weight:400;letter-spacing:0.920px;">0<span style="letter-spacing:0.61px">.</span>0</div>
<div class="t" style="left:1501.39px;top:855.00px;font-size:23px;color:#222222;font-weight:400;letter-spacing:0.920px;">0<span style="letter-spacing:0.61px">.</span>00</div>
<div class="t" style="left:1594.86px;top:855.00px;font-size:23px;color:#222222;font-weight:400;letter-spacing:0.920px;">28003</div>
<div style="position:absolute;left:0;top:890px;width:1664px;height:48px;background:#f4f5f5"></div>
<div class="t" style="left:111.00px;top:903.00px;font-size:23px;color:#222222;font-weight:400;letter-spacing:-0.087px;">nearbyd</div>
<div class="t" style="left:379.30px;top:903.00px;font-size:23px;color:#222222;font-weight:400;letter-spacing:0.920px;">0<span style="letter-spacing:0.61px">.</span>4</div>
<div class="t" style="left:525.38px;top:903.00px;font-size:23px;color:#222222;font-weight:400;letter-spacing:0.920px;">37<span style="letter-spacing:0.61px">.</span>46</div>
<div class="t" style="left:728.01px;top:903.00px;font-size:23px;color:#222222;font-weight:400;letter-spacing:0.920px;">6</div>
<div class="t" style="left:957.61px;top:903.00px;font-size:23px;color:#222222;font-weight:400;letter-spacing:0.920px;">1</div>
<div class="t" style="left:1121.13px;top:903.00px;font-size:23px;color:#222222;font-weight:400;letter-spacing:0.160px;">Apple</div>
<div class="t" style="left:1331.40px;top:903.00px;font-size:23px;color:#222222;font-weight:400;letter-spacing:0.920px;">0<span style="letter-spacing:0.61px">.</span>0</div>
<div class="t" style="left:1501.39px;top:903.00px;font-size:23px;color:#222222;font-weight:400;letter-spacing:0.920px;">0<span style="letter-spacing:0.61px">.</span>00</div>
<div class="t" style="left:1622.30px;top:903.00px;font-size:23px;color:#222222;font-weight:400;letter-spacing:0.920px;">797</div>
<div class="t" style="left:111.00px;top:951.00px;font-size:23px;color:#222222;font-weight:400;letter-spacing:-0.049px;">com.appl...</div>
<div class="t" style="left:379.30px;top:951.00px;font-size:23px;color:#222222;font-weight:400;letter-spacing:0.920px;">0<span style="letter-spacing:0.61px">.</span>3</div>
<div class="t" style="left:504.67px;top:951.00px;font-size:23px;color:#222222;font-weight:400;letter-spacing:0.920px;">6<span style="letter-spacing:0.61px">:</span>05<span style="letter-spacing:0.61px">.</span>34</div>
<div class="t" style="left:728.01px;top:951.00px;font-size:23px;color:#222222;font-weight:400;letter-spacing:0.920px;">6</div>
<div class="t" style="left:943.90px;top:951.00px;font-size:23px;color:#222222;font-weight:400;letter-spacing:0.920px;">17</div>
<div class="t" style="left:1121.13px;top:951.00px;font-size:23px;color:#222222;font-weight:400;letter-spacing:0.160px;">Apple</div>
<div class="t" style="left:1331.40px;top:951.00px;font-size:23px;color:#222222;font-weight:400;letter-spacing:0.920px;">0<span style="letter-spacing:0.61px">.</span>0</div>
<div class="t" style="left:1501.39px;top:951.00px;font-size:23px;color:#222222;font-weight:400;letter-spacing:0.920px;">0<span style="letter-spacing:0.61px">.</span>00</div>
<div class="t" style="left:1622.30px;top:951.00px;font-size:23px;color:#222222;font-weight:400;letter-spacing:0.920px;">577</div>
<div style="position:absolute;left:0;top:986px;width:1664px;height:48px;background:#f4f5f5"></div>
<div class="t" style="left:111.00px;top:999.00px;font-size:23px;color:#222222;font-weight:400;letter-spacing:0.102px;">logd</div>
<div class="t" style="left:379.30px;top:999.00px;font-size:23px;color:#222222;font-weight:400;letter-spacing:0.920px;">0<span style="letter-spacing:0.61px">.</span>3</div>
<div class="t" style="left:490.94px;top:999.00px;font-size:23px;color:#222222;font-weight:400;letter-spacing:0.920px;">41<span style="letter-spacing:0.61px">:</span>14<span style="letter-spacing:0.61px">.</span>68</div>
<div class="t" style="left:728.01px;top:999.00px;font-size:23px;color:#222222;font-weight:400;letter-spacing:0.920px;">4</div>
<div class="t" style="left:957.61px;top:999.00px;font-size:23px;color:#222222;font-weight:400;letter-spacing:0.920px;">0</div>
<div class="t" style="left:1121.13px;top:999.00px;font-size:23px;color:#222222;font-weight:400;letter-spacing:0.160px;">Apple</div>
<div class="t" style="left:1331.40px;top:999.00px;font-size:23px;color:#222222;font-weight:400;letter-spacing:0.920px;">0<span style="letter-spacing:0.61px">.</span>0</div>
<div class="t" style="left:1501.39px;top:999.00px;font-size:23px;color:#222222;font-weight:400;letter-spacing:0.920px;">0<span style="letter-spacing:0.61px">.</span>00</div>
<div class="t" style="left:1622.30px;top:999.00px;font-size:23px;color:#222222;font-weight:400;letter-spacing:0.920px;">376</div>
<div class="t" style="left:111.00px;top:1047.00px;font-size:23px;color:#222222;font-weight:400;letter-spacing:-0.120px;">duetexpe...</div>
<div class="t" style="left:379.30px;top:1047.00px;font-size:23px;color:#222222;font-weight:400;letter-spacing:0.920px;">0<span style="letter-spacing:0.61px">.</span>3</div>
<div class="t" style="left:525.38px;top:1047.00px;font-size:23px;color:#222222;font-weight:400;letter-spacing:0.920px;">50<span style="letter-spacing:0.61px">.</span>94</div>
<div class="t" style="left:728.01px;top:1047.00px;font-size:23px;color:#222222;font-weight:400;letter-spacing:0.920px;">4</div>
<div class="t" style="left:957.61px;top:1047.00px;font-size:23px;color:#222222;font-weight:400;letter-spacing:0.920px;">0</div>
<div class="t" style="left:1121.13px;top:1047.00px;font-size:23px;color:#222222;font-weight:400;letter-spacing:0.160px;">Apple</div>
<div class="t" style="left:1331.40px;top:1047.00px;font-size:23px;color:#222222;font-weight:400;letter-spacing:0.920px;">0<span style="letter-spacing:0.61px">.</span>0</div>
<div class="t" style="left:1501.39px;top:1047.00px;font-size:23px;color:#222222;font-weight:400;letter-spacing:0.920px;">0<span style="letter-spacing:0.61px">.</span>00</div>
<div class="t" style="left:1594.86px;top:1047.00px;font-size:23px;color:#222222;font-weight:400;letter-spacing:0.920px;">28018</div>
<div style="position:absolute;left:0;top:1072px;width:1664px;height:2px;background:#c6c6c6"></div>
<div style="position:absolute;left:0;top:1074px;width:1664px;height:240px;background:#ececec"></div>
<div style="position:absolute;left:252px;top:1098px;width:1160px;height:180px;box-sizing:border-box;border:2px solid #c6c6c6;border-radius:11px;background:#fff"></div>
<div style="position:absolute;left:647px;top:1099px;width:2px;height:178px;background:#c6c6c6"></div>
<div style="position:absolute;left:1015px;top:1099px;width:2px;height:178px;background:#c6c6c6"></div>
<div style="position:absolute;left:270px;top:1146px;width:360px;height:2px;background:#c8c8c8"></div>
<div style="position:absolute;left:1034px;top:1146px;width:360px;height:2px;background:#c8c8c8"></div>
<div style="position:absolute;left:270px;top:1186px;width:360px;height:2px;background:#c8c8c8"></div>
<div style="position:absolute;left:1034px;top:1186px;width:360px;height:2px;background:#c8c8c8"></div>
<div class="t" style="left:276.60px;top:1117.00px;font-size:23px;color:#222;font-weight:400;letter-spacing:-0.179px;">System:</div>
<div class="t" style="left:558.23px;top:1117.00px;font-size:23px;color:#e64032;font-weight:400;letter-spacing:0.720px;">2<span style="letter-spacing:0.61px">.</span>63<span style="letter-spacing:0.61px">%</span></div>
<div class="t" style="left:276.60px;top:1157.00px;font-size:23px;color:#222;font-weight:400;letter-spacing:-0.162px;">User:</div>
<div class="t" style="left:558.23px;top:1157.00px;font-size:23px;color:#5cb0e6;font-weight:400;letter-spacing:0.720px;">2<span style="letter-spacing:0.61px">.</span>06<span style="letter-spacing:0.61px">%</span></div>
<div class="t" style="left:276.60px;top:1197.00px;font-size:23px;color:#222;font-weight:400;letter-spacing:0.057px;">Idle:</div>
<div class="t" style="left:544.69px;top:1197.00px;font-size:23px;color:#222;font-weight:400;letter-spacing:0.720px;">95<span style="letter-spacing:0.61px">.</span>31<span style="letter-spacing:0.61px">%</span></div>
<div class="t" style="left:1036.60px;top:1117.00px;font-size:23px;color:#222;font-weight:400;letter-spacing:0.020px;">Threads:</div>
<div class="t" style="left:1325.38px;top:1117.00px;font-size:23px;color:#222;font-weight:400;letter-spacing:0.720px;">3<span style="letter-spacing:0.61px">,</span>162</div>
<div class="t" style="left:1036.60px;top:1157.00px;font-size:23px;color:#222;font-weight:400;letter-spacing:-0.106px;">Processes:</div>
<div class="t" style="left:1346.10px;top:1157.00px;font-size:23px;color:#222;font-weight:400;letter-spacing:1.120px;">745</div>
<div class="t" style="left:783.40px;top:1113.00px;font-size:18.5px;color:#7f7f7f;font-weight:700;letter-spacing:-0.072px;">CPU LOAD</div>
<div style="position:absolute;left:672px;top:1144px;width:320px;height:2px;background:#c8c8c8"></div>
<svg style="position:absolute;left:0;top:1090px" width="1664" height="200" viewBox="0 1090 1664 200"><polygon points="654.9,1272.5 654.90,1217.60 660.90,1219.40 666.90,1223.80 672.90,1225.70 678.90,1223.50 684.90,1224.20 690.90,1219.70 696.90,1223.80 702.90,1225.70 708.90,1224.60 714.90,1225.00 720.90,1218.70 726.90,1225.20 732.90,1213.60 738.90,1224.20 744.90,1224.20 750.90,1225.70 756.90,1224.20 762.90,1220.30 768.90,1224.40 774.90,1225.70 780.90,1224.80 786.90,1224.60 792.90,1221.00 798.90,1224.00 804.90,1224.00 810.90,1225.70 816.90,1223.50 822.90,1221.60 828.90,1223.30 834.90,1232.50 840.90,1199.70 846.90,1215.70 852.90,1212.50 858.90,1214.00 864.90,1208.80 870.90,1265.40 876.90,1264.80 882.90,1256.20 888.90,1267.60 894.90,1268.80 900.90,1267.60 906.90,1267.90 912.90,1264.20 918.90,1266.30 924.90,1262.50 930.90,1267.60 936.90,1268.30 942.90,1264.80 948.90,1266.50 954.90,1268.80 960.90,1267.90 966.90,1267.00 972.90,1264.80 978.90,1269.40 984.90,1263.60 990.90,1267.10 996.90,1265.40 1002.90,1263.60 1008.90,1268.80 1008.90,1272.5" fill="#d4e8f6" stroke="none"/><polyline points="654.9,1272.5 654.90,1217.60 660.90,1219.40 666.90,1223.80 672.90,1225.70 678.90,1223.50 684.90,1224.20 690.90,1219.70 696.90,1223.80 702.90,1225.70 708.90,1224.60 714.90,1225.00 720.90,1218.70 726.90,1225.20 732.90,1213.60 738.90,1224.20 744.90,1224.20 750.90,1225.70 756.90,1224.20 762.90,1220.30 768.90,1224.40 774.90,1225.70 780.90,1224.80 786.90,1224.60 792.90,1221.00 798.90,1224.00 804.90,1224.00 810.90,1225.70 816.90,1223.50 822.90,1221.60 828.90,1223.30 834.90,1232.50 840.90,1199.70 846.90,1215.70 852.90,1212.50 858.90,1214.00 864.90,1208.80 870.90,1265.40 876.90,1264.80 882.90,1256.20 888.90,1267.60 894.90,1268.80 900.90,1267.60 906.90,1267.90 912.90,1264.20 918.90,1266.30 924.90,1262.50 930.90,1267.60 936.90,1268.30 942.90,1264.80 948.90,1266.50 954.90,1268.80 960.90,1267.90 966.90,1267.00 972.90,1264.80 978.90,1269.40 984.90,1263.60 990.90,1267.10 996.90,1265.40 1002.90,1263.60 1008.90,1268.80 1008.90,1272.5" fill="none" stroke="#63b4e9" stroke-width="2" stroke-linejoin="round"/><polygon points="654.9,1272.5 654.90,1249.70 660.90,1251.30 666.90,1254.60 672.90,1256.00 678.90,1254.90 684.90,1255.60 690.90,1251.70 696.90,1254.60 702.90,1256.00 708.90,1254.90 714.90,1255.60 720.90,1251.40 726.90,1256.00 732.90,1246.50 738.90,1255.30 744.90,1254.70 750.90,1255.80 756.90,1254.70 762.90,1251.20 768.90,1254.70 774.90,1255.80 780.90,1255.10 786.90,1255.30 792.90,1251.90 798.90,1254.90 804.90,1254.90 810.90,1256.00 816.90,1254.70 822.90,1252.20 828.90,1254.00 834.90,1263.10 840.90,1246.00 846.90,1250.70 852.90,1248.00 858.90,1249.60 864.90,1245.40 870.90,1269.90 876.90,1269.90 882.90,1264.80 888.90,1270.30 894.90,1271.30 900.90,1270.60 906.90,1271.10 912.90,1268.00 918.90,1269.60 924.90,1266.50 930.90,1270.40 936.90,1270.60 942.90,1268.20 948.90,1270.20 954.90,1271.30 960.90,1270.80 966.90,1270.60 972.90,1268.20 978.90,1271.10 984.90,1269.70 990.90,1270.80 996.90,1269.40 1002.90,1268.00 1008.90,1271.10 1008.90,1272.5" fill="#dbbcc1" stroke="#e8432f" stroke-width="2" stroke-linejoin="round"/></svg>
</div></div>
</body></html>
